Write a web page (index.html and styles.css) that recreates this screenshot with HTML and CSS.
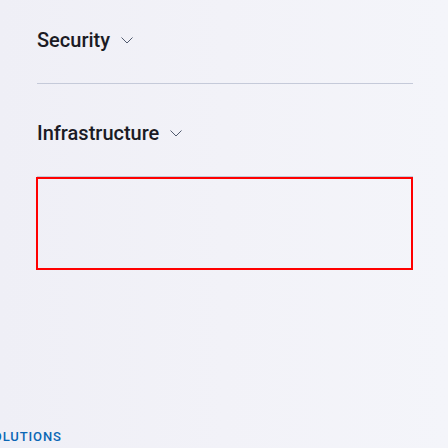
FILE: index.html
```html
<!DOCTYPE html>
<html lang="en">
<head>
<meta charset="utf-8">
<title>Menu</title>
<link rel="stylesheet" href="styles.css">
</head>
<body>
<div class="page">
  <nav class="menu">
    <div class="item">
      <button class="trigger"><span class="label">Security</span>
        <svg class="chev" viewBox="0 0 12 7" width="12" height="7"><path d="M0.5 0.5 L6 6 L11.5 0.5" fill="none" stroke="#505a6e" stroke-width="1"/></svg>
      </button>
    </div>
    <div class="item">
      <button class="trigger"><span class="label">Infrastructure</span>
        <svg class="chev" viewBox="0 0 12 7" width="12" height="7"><path d="M0.5 0.5 L6 6 L11.5 0.5" fill="none" stroke="#505a6e" stroke-width="1"/></svg>
      </button>
    </div>
    <div class="focus-box"></div>
  </nav>
  <div class="section-label">SOLUTIONS</div>
</div>
</body>
</html>
```
FILE: styles.css
```css
* { box-sizing: border-box; }
html, body { margin: 0; padding: 0; }
body {
  width: 448px;
  height: 448px;
  overflow: hidden;
  background: linear-gradient(to right, #efeff6 0%, #f2f2f8 50%, #f4f5fa 100%);
  font-family: Roboto, "Noto Sans", sans-serif;
}
.page {
  display: flex;
  flex-direction: column;
  height: 448px;
}
.menu {
  margin-top: -9px;
  margin-left: 36px;
  width: 377px;
}
.item {
  height: 93px;
  padding-top: 35px;
  border-bottom: 1px solid #c5cad9;
  margin-left: 1px;
}
.trigger {
  display: flex;
  align-items: center;
  gap: 11px;
  background: none;
  border: 0;
  padding: 0;
  font: inherit;
  cursor: pointer;
}
.label {
  font-size: 20px;
  font-weight: 500;
  line-height: 28px;
  color: #1b1b24;
}
.chev { display: block; margin-top: 1px; }
.focus-box {
  height: 93px;
  border: 2px solid #ff0000;
}
.section-label {
  margin-top: auto;
  margin-left: -16px;
  margin-bottom: 2px;
  font-size: 13px;
  font-weight: 500;
  letter-spacing: 0.9px;
  color: #0a67b5;
  line-height: 18px;
}
```
